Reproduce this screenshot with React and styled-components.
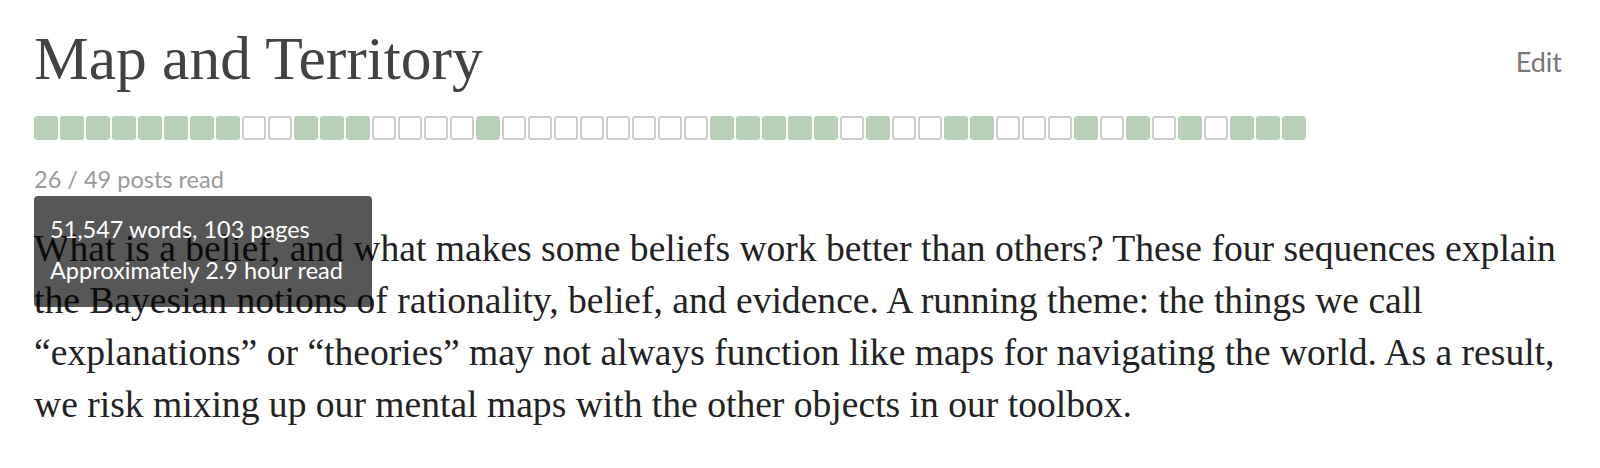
import styled, { createGlobalStyle } from 'styled-components';

const GlobalStyle = createGlobalStyle`
  body {
    margin: 0;
    background: #fff;
  }
`;

// 1 = read, 0 = unread
const posts = [
  1, 1, 1, 1, 1, 1, 1, 1, 0, 0,
  1, 1, 1, 0, 0, 0, 0, 1, 0, 0,
  0, 0, 0, 0, 0, 0, 1, 1, 1, 1,
  1, 0, 1, 0, 0, 1, 1, 0, 0, 0,
  1, 0, 1, 0, 1, 0, 1, 1, 1,
];

const descriptionLines = [
  'What is a belief, and what makes some beliefs work better than others? These four sequences explain',
  'the Bayesian notions of rationality, belief, and evidence. A running theme: the things we call',
  '“explanations” or “theories” may not always function like maps for navigating the world. As a result,',
  'we risk mixing up our mental maps with the other objects in our toolbox.',
];

export default function App() {
  const readCount = posts.filter(Boolean).length;
  return (
    <>
      <GlobalStyle />
      <Page>
        <Header>
          <Title>Map and Territory</Title>
          <EditLink>Edit</EditLink>
        </Header>
        <Progress>
          {posts.map((read, i) => (
            <PostBox key={i} $read={read === 1} />
          ))}
        </Progress>
        <StatsWrap>
          <Count>
            {readCount} / {posts.length} posts read
          </Count>
          <Tooltip>
            <div>51,547 words, 103 pages</div>
            <div>Approximately 2.9 hour read</div>
          </Tooltip>
        </StatsWrap>
        <Description>
          {descriptionLines.map((line) => (
            <Line key={line}>{line}</Line>
          ))}
        </Description>
      </Page>
    </>
  );
}

const Page = styled.div`
  padding: 22px 38px 0 34px;
`;

const Header = styled.div`
  display: flex;
  justify-content: space-between;
  align-items: flex-start;
`;

const Title = styled.h1`
  margin: 0;
  font-family: 'Liberation Serif', serif;
  font-size: 61.5px;
  font-weight: 400;
  line-height: 72px;
  color: #424242;
`;

const EditLink = styled.span`
  margin-top: 25px;
  font-family: Lato, 'Open Sans', sans-serif;
  font-size: 27px;
  line-height: 30px;
  color: #777;
  cursor: pointer;
`;

const Progress = styled.div`
  display: flex;
  gap: 2px;
  margin-top: 22px;
`;

const PostBox = styled.div`
  box-sizing: border-box;
  width: 24px;
  height: 24px;
  border-radius: 3px;
  background: ${(p) => (p.$read ? '#b8cfb8' : '#fff')};
  border: 2px solid ${(p) => (p.$read ? '#b8cfb8' : '#cccccc')};
`;

const StatsWrap = styled.div`
  position: relative;
  margin-top: 26px;
`;

const Count = styled.div`
  font-family: Lato, 'Open Sans', sans-serif;
  font-size: 23.5px;
  line-height: 26px;
  color: #9a9a9a;
`;

const Tooltip = styled.div`
  position: absolute;
  top: 30px;
  left: 0;
  z-index: 2;
  box-sizing: border-box;
  width: 338px;
  height: 111px;
  padding: 13px 16px 0;
  border-radius: 4px;
  background: rgba(0, 0, 0, 0.66);
  color: #fff;
  font-family: Lato, 'Open Sans', sans-serif;
  font-size: 23.5px;
  line-height: 41px;
`;

const Description = styled.p`
  margin: 31px 0 0;
  font-family: 'Liberation Serif', serif;
  font-size: 37.6px;
  line-height: 52px;
  color: #222;
`;

const Line = styled.span`
  display: block;
  white-space: nowrap;
`;
